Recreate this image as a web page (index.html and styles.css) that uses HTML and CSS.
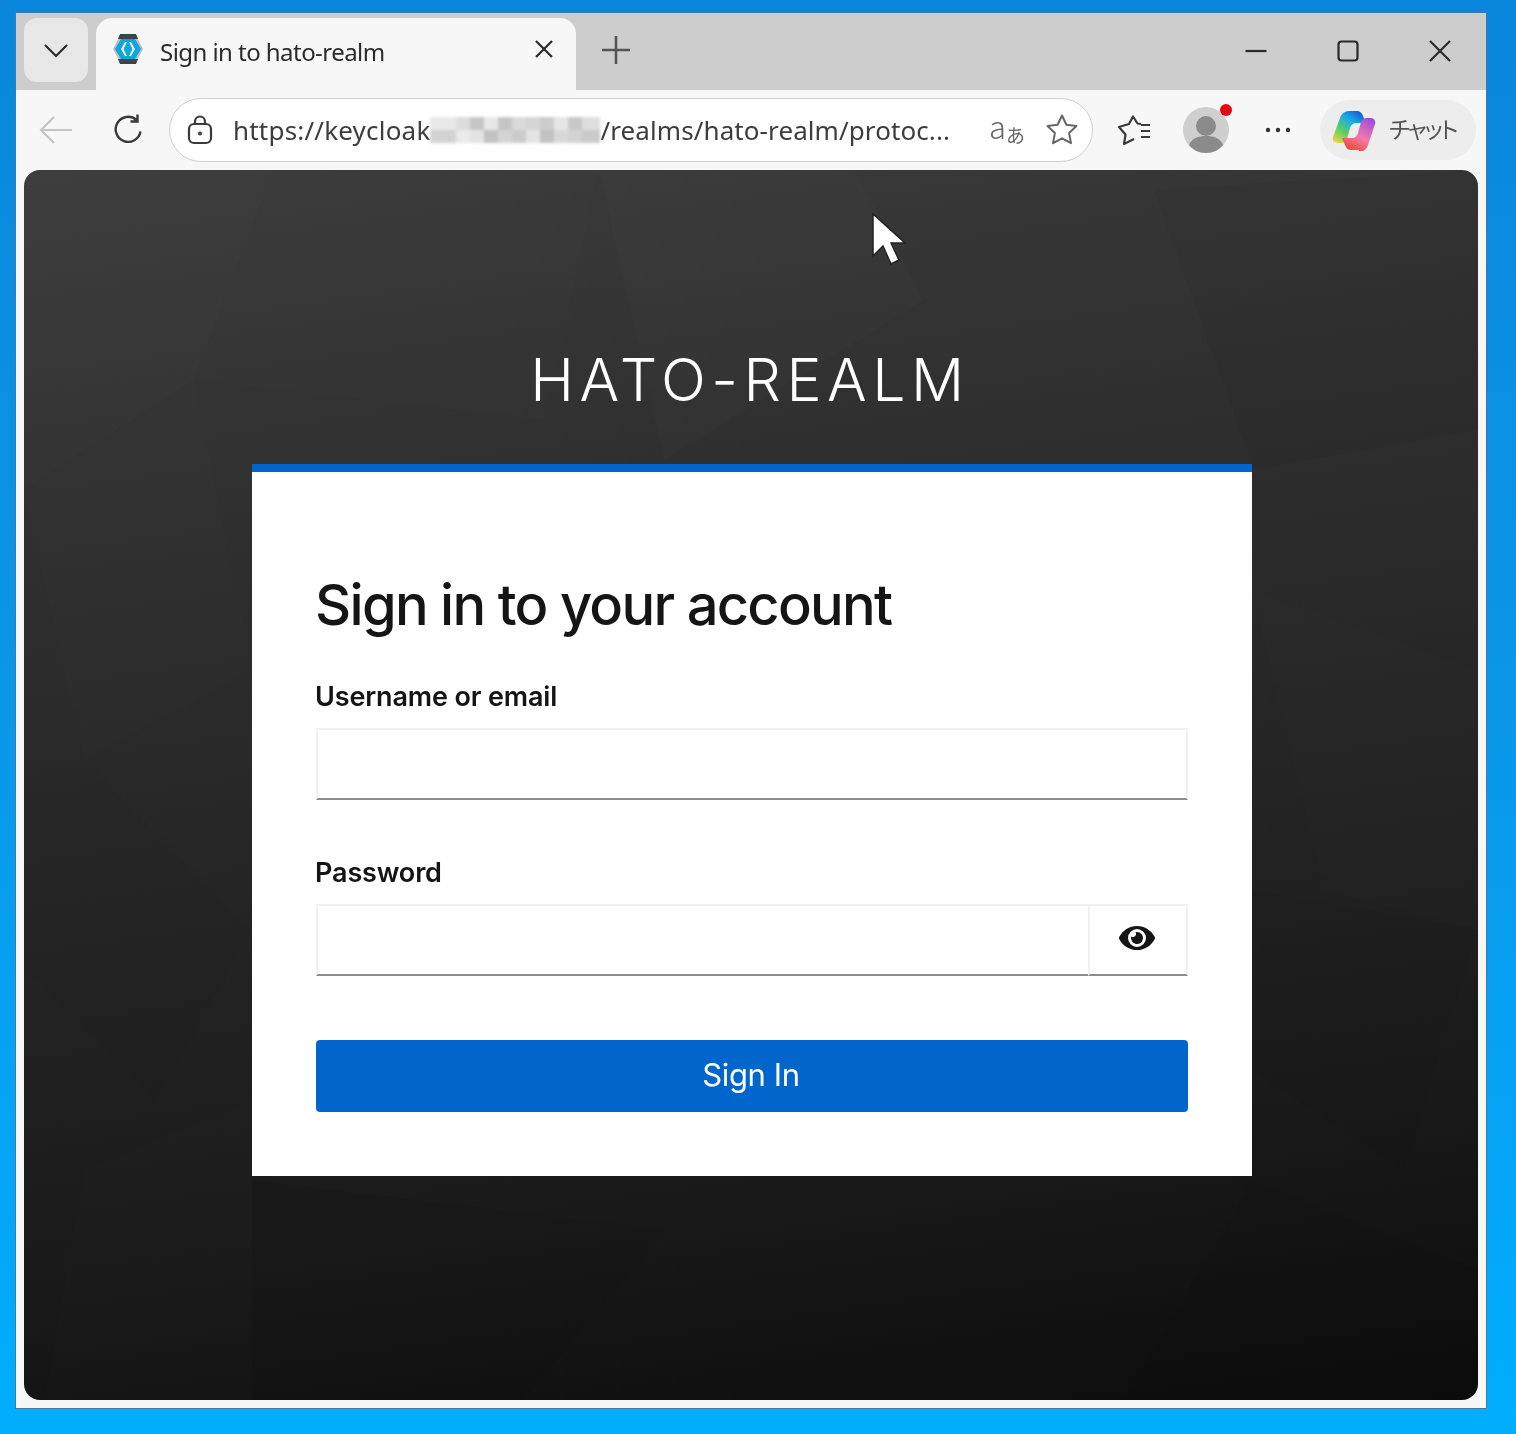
FILE: index.html
```html
<!DOCTYPE html>
<html lang="en">
<head>
<meta charset="utf-8">
<title>Sign in to hato-realm</title>
<link rel="stylesheet" href="styles.css">
</head>
<body>
<div class="window">
  <div class="tabstrip">
    <button class="tab-menu" aria-label="Tab actions">
      <svg width="26" height="16" viewBox="0 0 26 16"><path d="M2 3l11 11L24 3" class="stroke" stroke-width="2.2"/></svg>
    </button>
    <div class="tab">
      <svg class="favicon" width="32" height="32" viewBox="0 0 32 32">
        <path d="M9 1h14l8 15-8 15H9L1 16z" fill="#b9bfc2"/>
        <path d="M8 1h16l2 5H6zM6 26h20l-2 5H8z" fill="#3d4347"/>
        <path d="M9 6h14l6 10-6 10H9L3 16z" fill="#11a4de"/>
        <path d="M13 9l-4 7 4 7h2l-3.500-7L15 9zM19 9l4 7-4 7h-2l3.500-7L17 9z" fill="#e9f7fc"/>
      </svg>
      <span class="tab-title">Sign in to hato-realm</span>
      <svg class="tab-close" width="20" height="20" viewBox="0 0 20 20"><path d="M2 2l16 16M18 2L2 18" class="stroke" stroke-width="2.2"/></svg>
    </div>
    <svg class="new-tab" width="32" height="32" viewBox="0 0 32 32"><path d="M16 2v28M2 16h28" stroke="#555" stroke-width="2.6" fill="none"/></svg>
    <div class="win-controls">
      <svg width="24" height="24" viewBox="0 0 24 24"><path d="M1.500 12h21" class="stroke" stroke-width="2.2"/></svg>
      <svg width="24" height="24" viewBox="0 0 24 24"><rect x="2.500" y="2.500" width="19" height="19" rx="3" class="stroke" stroke-width="2.2"/></svg>
      <svg width="24" height="24" viewBox="0 0 24 24"><path d="M2 2l20 20M22 2L2 22" class="stroke" stroke-width="2.2"/></svg>
    </div>
  </div>

  <div class="toolbar">
    <svg class="tb-back" width="36" height="32" viewBox="0 0 36 32"><path d="M34 16H3M16 3L3 16l13 13" stroke="#c4c4c4" stroke-width="2.2" fill="none"/></svg>
    <svg class="tb-reload" width="32" height="32" viewBox="0 0 32 32"><path d="M27.500 17.500A12.500 12.500 0 1 1 23.500 6M24.500 0.500V7.500H17.500" class="stroke soft" stroke-width="2.4"/></svg>
    <div class="urlbar">
      <svg class="lock" width="28" height="30" viewBox="0 0 28 30"><rect x="3" y="9" width="22" height="19" rx="5" class="stroke soft" stroke-width="2.2"/><path d="M9 9V6.500a5 5 0 0 1 10 0V9" class="stroke soft" stroke-width="2.2"/><circle cx="14" cy="18.500" r="2" fill="#444"/></svg>
      <span class="url">https://keycloak</span>
      <svg class="mosaic" width="170" height="26" viewBox="0 0 170 26">
        <rect width="170" height="26" fill="#e2e2e2"/>
        <rect x="0" y="0" width="26" height="13" fill="#e8e8e8"/><rect x="0" y="13" width="26" height="13" fill="#d2d2d2"/>
        <rect x="26" y="0" width="14" height="13" fill="#dcdcdc"/><rect x="26" y="13" width="14" height="13" fill="#ebebeb"/>
        <rect x="40" y="0" width="14" height="13" fill="#c6c6c6"/><rect x="40" y="13" width="14" height="13" fill="#e4e4e4"/>
        <rect x="54" y="0" width="14" height="13" fill="#e8e8e8"/><rect x="54" y="13" width="14" height="13" fill="#c2c2c2"/>
        <rect x="68" y="0" width="14" height="13" fill="#c5c5c5"/><rect x="68" y="13" width="14" height="13" fill="#d4d4d4"/>
        <rect x="82" y="0" width="14" height="13" fill="#dadada"/><rect x="82" y="13" width="14" height="13" fill="#cbcbcb"/>
        <rect x="96" y="0" width="14" height="13" fill="#d5d5d5"/><rect x="96" y="13" width="14" height="13" fill="#e4e4e4"/>
        <rect x="110" y="0" width="14" height="13" fill="#cccccc"/><rect x="110" y="13" width="14" height="13" fill="#c2c2c2"/>
        <rect x="124" y="0" width="14" height="13" fill="#e6e6e6"/><rect x="124" y="13" width="14" height="13" fill="#d8d8d8"/>
        <rect x="138" y="0" width="14" height="13" fill="#c8c8c8"/><rect x="138" y="13" width="14" height="13" fill="#d2d2d2"/>
        <rect x="152" y="0" width="18" height="13" fill="#dedede"/><rect x="152" y="13" width="18" height="13" fill="#cacaca"/>
      </svg>
      <span class="url grow">/realms/hato-realm/protoc...</span>
      <span class="translate"><span class="tr-a">a</span><span class="tr-j">あ</span></span>
      <svg class="star" width="34" height="34" viewBox="0 0 34 34"><path d="M17 2.500l4.400 9.300 10.100 1.300-7.400 7 1.900 10.100-9-4.900-9 4.900 1.900-10.100-7.400-7 10.100-1.300z" stroke="#666" stroke-width="2" fill="none" stroke-linejoin="round"/></svg>
    </div>
    <svg class="tb-fav" width="35" height="32" viewBox="0 0 35 32"><path d="M25 10l-3.500-.5L17 2.500 13 10 3 13l6.500 7.500L8 30l10-5" class="stroke soft" stroke-width="2.200" stroke-linejoin="round"/><path d="M25 11h9M25 17h9M25 23h9" class="stroke soft" stroke-width="2.200"/></svg>
    <div class="avatar">
      <svg width="46" height="46" viewBox="0 0 46 46"><circle cx="23" cy="23" r="23" fill="#cfcfcf"/><circle cx="23" cy="19" r="10" fill="#8b8b8b"/><path d="M6 38c3-7 9-9 17-9s14 2 17 9c-4 5-10 8-17 8s-13-3-17-8z" fill="#8b8b8b"/></svg>
      <span class="badge"></span>
    </div>
    <svg class="tb-more" width="28" height="8" viewBox="0 0 28 8"><circle cx="4" cy="4" r="2.200" fill="#333"/><circle cx="14" cy="4" r="2.200" fill="#333"/><circle cx="24" cy="4" r="2.200" fill="#333"/></svg>
    <div class="chat">
      <svg width="44" height="41" viewBox="0 0 44 41">
        <defs>
          <linearGradient id="cpA" x1="0.800" y1="0" x2="0.100" y2="1"><stop offset="0" stop-color="#1657d6"/><stop offset="0.300" stop-color="#18a8ea"/><stop offset="0.650" stop-color="#58cf66"/><stop offset="1" stop-color="#f5d33a"/></linearGradient>
          <linearGradient id="cpB" x1="0.300" y1="1" x2="0.800" y2="0"><stop offset="0" stop-color="#ee4a2e"/><stop offset="0.450" stop-color="#f27aa8"/><stop offset="1" stop-color="#a04be2"/></linearGradient>
        </defs>
        <path d="M17 1h8c3 0 5 2 6 5l3 7H24c-3 0-5 2-6 5l-3 11c-1 3-3 4-6 4H6c-4 0-6-3-5-6L8 8c1-4 5-7 9-7z" fill="url(#cpA)"/>
        <path d="M27 40h-8c-3 0-5-2-6-5l-3-7h10c3 0 5-2 6-5l3-11c1-3 3-4 6-4h3c4 0 6 3 5 6l-7 21c-1 4-5 7-9 7z" fill="url(#cpB)"/>
      </svg>
      <span class="chat-label">チャット</span>
    </div>
  </div>

  <main class="page">
    <svg class="facets" viewBox="0 0 1454 1230" preserveAspectRatio="none" aria-hidden="true">
      <polygon points="0,0 250,0 170,210 0,320" fill="#fff" opacity=".012"/>
      <polygon points="250,0 575,0 520,250 170,210" fill="#fff" opacity=".008"/>
      <polygon points="575,0 830,0 900,130 640,290" fill="#fff" opacity=".01"/>
      <polygon points="1130,20 1454,0 1454,260 1230,300" fill="#000" opacity=".03"/>
      <polygon points="0,320 170,210 228,500 60,590" fill="#fff" opacity=".009"/>
      <polygon points="0,590 60,590 228,760 130,930 0,800" fill="#000" opacity=".025"/>
      <polygon points="1228,420 1454,500 1454,760 1300,720" fill="#fff" opacity=".009"/>
      <polygon points="1228,720 1454,760 1380,1000 1228,900" fill="#000" opacity=".03"/>
      <polygon points="60,1000 228,930 228,1230 20,1230" fill="#fff" opacity=".006"/>
      <polygon points="228,1010 640,1060 500,1230 228,1230" fill="#000" opacity=".04"/>
      <polygon points="640,1060 1228,1010 1100,1230 500,1230" fill="#fff" opacity=".005"/>
      <polygon points="1228,1010 1454,1100 1454,1230 1100,1230" fill="#000" opacity=".035"/>
    </svg>
    <h1 class="realm">HATO-REALM</h1>
    <section class="card">
      <h2 class="card-title">Sign in to your account</h2>
      <form class="form">
        <div class="field">
          <label class="label" for="username">Username or email</label>
          <input class="input" id="username" type="text">
        </div>
        <div class="field">
          <label class="label" for="password">Password</label>
          <div class="input-group">
            <input class="input" id="password" type="password">
            <button class="eye" type="button" aria-label="Show password">
              <svg width="36" height="32" viewBox="0 0 576 512"><path fill="#151515" d="M572.52 241.4C518.29 135.59 410.93 64 288 64S57.68 135.64 3.48 241.41a32.35 32.35 0 0 0 0 29.19C57.71 376.41 165.07 448 288 448s230.32-71.64 284.52-177.41a32.35 32.35 0 0 0 0-29.19zM288 400a144 144 0 1 1 144-144 143.93 143.93 0 0 1-144 144zm0-240a95.31 95.31 0 0 0-25.31 3.79 47.85 47.85 0 0 1-66.9 66.9A95.78 95.78 0 1 0 288 160z"/></svg>
            </button>
          </div>
        </div>
        <button class="submit" type="button">Sign In</button>
      </form>
    </section>
    <svg class="cursor" width="38" height="56" viewBox="0 0 38 56"><path d="M2 2v42l10-10 8 18 8-4-8-17h14z" fill="#fff" stroke="#222" stroke-width="1.500"/></svg>
  </main>
</div>
</body>
</html>
```

FILE: styles.css
```css
* { box-sizing: border-box; }

html, body { height: 100%; }

body {
  margin: 0;
  padding: 12px 0 0 15px;
  overflow: hidden;
  background: linear-gradient(180deg, #0a86dc 0%, #0a97ea 50%, #01aefe 100%);
  font-family: "Inter", "Noto Sans", sans-serif;
}

.stroke { fill: none; stroke: #2a2a2a; }
.stroke.soft { stroke: #3a3a3a; }

.window {
  width: 1472px;
  height: 1397px;
  display: flex;
  flex-direction: column;
  background: #f7f7f7;
  border: 1px solid #3f7ba3;
  filter: blur(0.6px);
}

/* tab strip */
.tabstrip {
  height: 77px;
  flex: none;
  display: flex;
  align-items: flex-start;
  padding: 5px 0 0 8px;
  background: #cdcdcd;
}

.tab-menu {
  width: 64px;
  height: 64px;
  flex: none;
  display: flex;
  align-items: center;
  justify-content: center;
  padding: 0;
  border: 0;
  border-radius: 13px;
  background: #e7e7e7;
}

.tab {
  width: 480px;
  height: 72px;
  flex: none;
  margin-left: 8px;
  padding: 0 22px 10px 16px;
  display: flex;
  align-items: center;
  border-radius: 16px 16px 0 0;
  background: #f7f7f7;
}

.favicon { flex: none; }

.tab-title {
  flex: 1;
  margin-left: 16px;
  padding-top: 4px;
  font-family: "Noto Sans", sans-serif;
  font-size: 24px;
  letter-spacing: -0.55px;
  color: #2b2b2b;
}

.new-tab { margin: 16px 0 0 24px; flex: none; }

.win-controls {
  margin-left: auto;
  padding: 21px 34px 0 0;
  display: flex;
  gap: 68px;
}

/* toolbar */
.toolbar {
  height: 80px;
  flex: none;
  display: flex;
  align-items: center;
  padding: 0 10px 0 22px;
  background: #f7f7f7;
}

.tb-back { flex: none; }
.tb-reload { flex: none; margin-left: 39px; }

.urlbar {
  width: 924px;
  height: 64px;
  flex: none;
  margin-left: 24px;
  padding: 0 13px 0 16px;
  display: flex;
  align-items: center;
  border: 1.5px solid #cfcfcf;
  border-radius: 32px;
  background: #fff;
}

.lock { flex: none; }

.url {
  margin-left: 19px;
  font-family: "Noto Sans", sans-serif;
  font-size: 26px;
  letter-spacing: 0.2px;
  color: #3d3d3d;
  white-space: nowrap;
}

.url.grow { flex: 1; margin-left: 0; letter-spacing: 0.09px; }

.mosaic { flex: none; filter: blur(1.5px); }

.translate {
  width: 54px;
  flex: none;
  display: flex;
  align-items: center;
  font-family: "Noto Sans CJK JP", sans-serif;
  color: #666;
}

.tr-a { font-size: 31px; font-weight: 300; line-height: 1; margin-top: -9px; }
.tr-j { font-size: 19px; line-height: 1; margin-top: 9px; }

.star { flex: none; margin-left: 2px; }

.tb-fav { flex: none; margin-left: 23px; }

.avatar {
  position: relative;
  width: 46px;
  height: 46px;
  flex: none;
  margin-left: 32px;
}

.avatar svg { display: block; }

.badge {
  position: absolute;
  top: -3px;
  right: -3px;
  width: 12px;
  height: 12px;
  border-radius: 50%;
  background: #e30613;
}

.tb-more { flex: none; margin-left: 35px; }

.chat {
  width: 156px;
  height: 60px;
  flex: none;
  margin-left: 28px;
  padding-left: 12px;
  display: flex;
  align-items: center;
  gap: 13px;
  border-radius: 30px;
  background: #ededed;
}

.chat-label {
  padding-bottom: 5px;
  font-family: "Noto Sans CJK JP", sans-serif;
  font-size: 23px;
  font-feature-settings: "palt";
  letter-spacing: -2px;
  white-space: nowrap;
  color: #555;
}

/* page */
.page {
  position: relative;
  flex: none;
  width: 1454px;
  height: 1230px;
  margin-left: 8px;
  padding-left: 2px;
  display: flex;
  flex-direction: column;
  align-items: center;
  overflow: hidden;
  border-radius: 16px;
  background: linear-gradient(172deg, #3c3c3c 0%, #303030 25%, #242424 55%, #181818 80%, #0c0c0c 100%);
}

.facets {
  position: absolute;
  inset: 0;
  width: 100%;
  height: 100%;
}

.realm {
  position: relative;
  margin: 172px 0 0;
  height: 122px;
  font-family: "Inter", sans-serif;
  font-size: 59px;
  font-weight: 300;
  line-height: 76px;
  letter-spacing: 5.5px;
  color: #fff;
  transform: translateX(-2px);
}

.card {
  position: relative;
  width: 1000px;
  height: 712px;
  flex: none;
  padding: 100px 64px 0;
  border-top: 8px solid #0066cc;
  background: #fff;
}

.card-title {
  margin: 0 0 0 -1px;
  font-family: "Inter", sans-serif;
  font-size: 56px;
  font-weight: 500;
  line-height: 66px;
  letter-spacing: -1.7px;
  color: #151515;
}

.form { display: flex; flex-direction: column; }

.field { margin-top: 36px; }
.field + .field { margin-top: 50px; }

.label {
  display: block;
  height: 44px;
  margin: 0 0 10px -1px;
  font-family: "Inter", sans-serif;
  font-size: 27px;
  font-weight: 600;
  line-height: 46px;
  letter-spacing: -0.15px;
  color: #151515;
}

.input {
  display: block;
  width: 100%;
  height: 72px;
  padding: 0 16px;
  border: 2px solid #f0f0f0;
  border-bottom-color: #8a8d90;
  border-radius: 0;
  background: #fff;
  outline: 0;
}

.input-group { display: flex; }
.input-group .input { flex: 1; min-width: 0; border-right: 0; }

.eye {
  width: 100px;
  height: 72px;
  flex: none;
  display: flex;
  align-items: center;
  justify-content: center;
  padding: 0 2px 4px 0;
  border: 2px solid #f0f0f0;
  border-bottom-color: #8a8d90;
  background: #fff;
}

.submit {
  width: 100%;
  height: 72px;
  margin-top: 64px;
  padding: 0 2px 3px 0;
  border: 0;
  border-radius: 4px;
  background: #0066cc;
  font-family: "Inter", sans-serif;
  font-size: 31px;
  letter-spacing: -0.4px;
  color: #fff;
}

.cursor {
  position: absolute;
  left: 847px;
  top: 42px;
}
```
